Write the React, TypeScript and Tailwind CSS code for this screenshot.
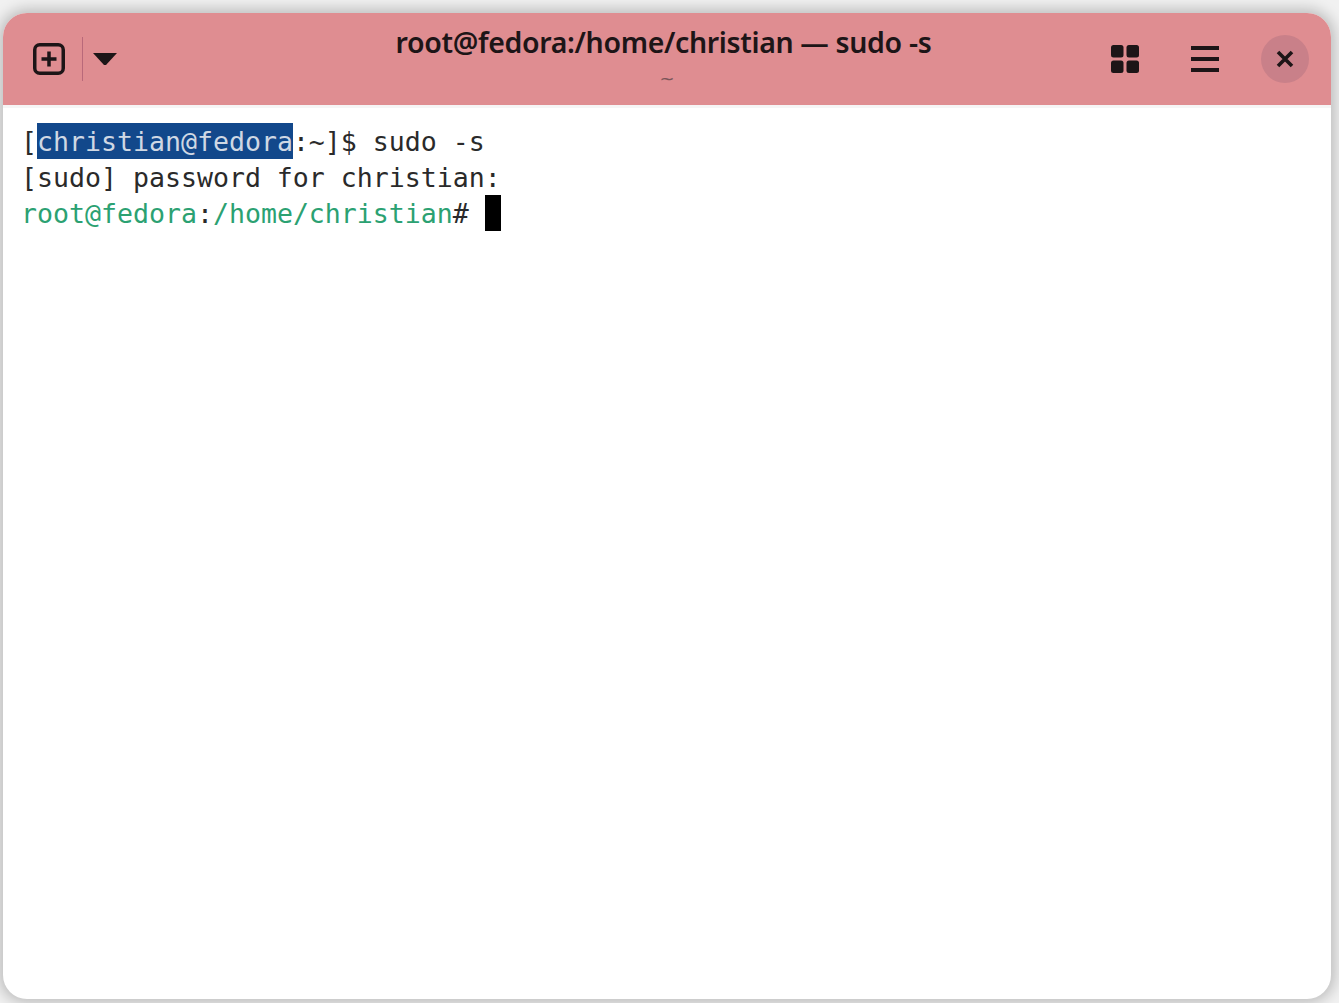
export default function App() {
  return (
    <div className="w-[1339px] h-[1003px] bg-[#f1f1f1] overflow-hidden pt-[13px] pl-[3px]">
      <div className="w-[1328px] h-[986px] rounded-[24px] overflow-hidden bg-white flex flex-col shadow-[0_0_14px_4px_rgba(0,0,0,0.22)]">
        <header className="h-[92px] shrink-0 bg-[#df8d91] grid grid-cols-[1fr_auto_1fr]">
          <div className="flex items-center pl-[30px]">
            <svg width="32" height="32" viewBox="0 0 32 32" fill="none" stroke="#1d1517">
              <rect x="1.75" y="1.75" width="28.5" height="28.5" rx="5" strokeWidth="3.5" />
              <path d="M16 8.5v15M8.5 16h15" strokeWidth="3.5" />
            </svg>
            <div className="w-[1px] h-[44px] bg-[#b9697a] ml-[17px] mr-[10px]" />
            <svg width="24" height="12" viewBox="0 0 24 12" fill="#1d1517">
              <path d="M0 0h24L13 12h-2z" />
            </svg>
          </div>
          <div className="flex flex-col items-center pt-[9px]" style={{ fontFamily: '"Noto Sans", sans-serif' }}>
            <div className="text-[28.5px] leading-[40px] font-semibold text-[#1d1517] tracking-[-0.35px] mr-[7px]">
              root@fedora:/home/christian — sudo -s
            </div>
            <div
              className="text-[18px] leading-[20px] mt-[7px] text-[#7b5559]"
              style={{ fontFamily: '"DejaVu Sans", sans-serif' }}
            >
              ~
            </div>
          </div>
          <div className="flex items-center justify-end pr-[22px]">
            <svg width="28" height="28" viewBox="0 0 28 28" fill="#1d1517" className="mr-[52px]">
              <rect x="0" y="0" width="12.5" height="12.5" rx="2.5" />
              <rect x="15.5" y="0" width="12.5" height="12.5" rx="2.5" />
              <rect x="0" y="15.5" width="12.5" height="12.5" rx="2.5" />
              <rect x="15.5" y="15.5" width="12.5" height="12.5" rx="2.5" />
            </svg>
            <svg width="28" height="26" viewBox="0 0 28 26" fill="#1d1517" className="mr-[42px]">
              <rect x="0" y="0" width="28" height="4" />
              <rect x="0" y="11" width="28" height="4" />
              <rect x="0" y="22" width="28" height="4" />
            </svg>
            <div className="w-[48px] h-[48px] rounded-full bg-[#c98089] flex items-center justify-center">
              <svg width="18" height="18" viewBox="0 0 18 18" fill="none" stroke="#1d1517" strokeWidth="3.6">
                <path d="M2 2l14 14M16 2L2 16" />
              </svg>
            </div>
          </div>
        </header>
        <div className="h-[3px] shrink-0 bg-[#f6f5f5]" />
        <main
          className="flex-1 pl-[18px] pt-[15px] text-[26.57px] leading-[38px] text-[#2a2a2a] whitespace-pre"
          style={{ fontFamily: '"DejaVu Sans Mono", monospace' }}
        >
          <div className="flex h-[36px]">
            <span>[</span>
            <span className="h-[36px] bg-[#12488b] text-[#cfd8e4]">christian@fedora</span>
            <span>:~]$ sudo -s</span>
          </div>
          <div className="h-[36px]">[sudo] password for christian:</div>
          <div className="flex h-[36px]">
            <span className="text-[#2ba172]">root@fedora</span>
            <span>:</span>
            <span className="text-[#2ba172]">/home/christian</span>
            <span># </span>
            <span className="w-[16px] h-[36px] bg-black" />
          </div>
        </main>
      </div>
    </div>
  );
}
